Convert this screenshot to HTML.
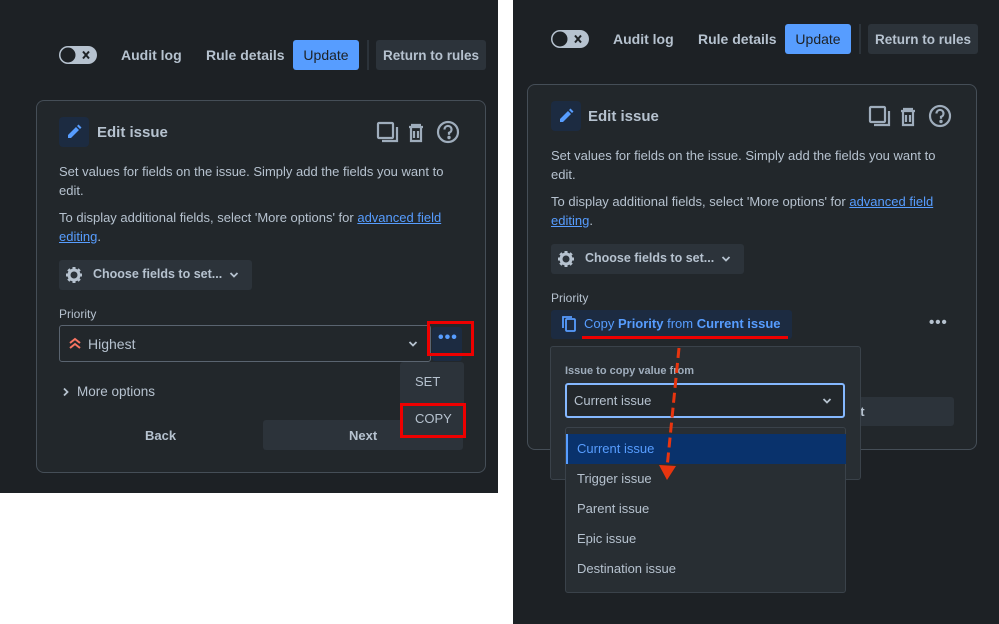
<!DOCTYPE html>
<html><head><meta charset="utf-8"><style>
*{box-sizing:border-box;margin:0;padding:0}
body{width:999px;height:624px;background:#fff;position:relative;overflow:hidden;font-family:"Liberation Sans",sans-serif;color:#b6c2cf}
.p{position:absolute;background:#1d2125;overflow:hidden}
.a{position:absolute}
.t{position:absolute;font-size:13px;color:#b6c2cf;white-space:nowrap}
.b{font-weight:bold}
.btn{position:absolute;border-radius:3px;font-size:14px;font-weight:bold;display:flex;align-items:center;justify-content:center}
.card{position:absolute;border:1px solid #454e57;border-radius:8px;background:#22272b}
a{color:#579dff;text-decoration:underline}
</style></head><body>

<!-- LEFT PANEL -->
<div class="p" style="left:0;top:0;width:498px;height:493px">
  <svg class="a" style="left:58px;top:45px" width="40" height="20" viewBox="0 0 40 20"><rect x="1" y="1" width="38" height="18" rx="9" fill="#b6c2cf"/><circle cx="10" cy="10" r="7.5" fill="#1d2125"/><path d="M25 6.5l6 7M31 6.5l-6 7" stroke="#1d2125" stroke-width="2"/></svg>
  <div class="t b" style="left:121px;top:47px;font-size:14px">Audit log</div>
  <div class="t b" style="left:206px;top:47px;font-size:14px">Rule details</div>
  <div class="btn" style="left:293px;top:40px;width:66px;height:30px;background:#579dff;color:#1d2125;font-weight:normal">Update</div>
  <div class="a" style="left:367px;top:40px;width:2px;height:30px;background:#2c333a"></div>
  <div class="btn" style="left:376px;top:40px;width:110px;height:30px;background:#2c333a;color:#b6c2cf;font-size:13.5px">Return to rules</div>
  <div class="card" style="left:36px;top:100px;width:450px;height:373px"></div>
  <div class="a" style="left:59px;top:117px;width:30px;height:30px;border-radius:4px;background:#1c2b41"></div>
  <svg class="a" style="left:64px;top:122px" width="20" height="20" viewBox="0 0 20 20"><path d="M4 13l8-8 3 3-8 8H4z M13 4l1.5-1.5 3 3L16 7z" fill="#579dff"/></svg>
  <div class="t b" style="left:97px;top:124px;font-size:15px">Edit issue</div>
  <svg class="a" style="left:376px;top:120px" width="86" height="26" viewBox="0 0 86 26" fill="none" stroke="#9fadbc" stroke-width="2.2"><rect x="2" y="3" width="15" height="15" rx="1"/><path d="M6 21h15V7"/><path d="M35 5h10M33 7h14M35 7v14h10V7M38 11v7M42 11v7"/><circle cx="72" cy="12" r="10"/><path d="M68.5 9.5a3.5 3.5 0 1 1 4.5 3.3v2"/><circle cx="73" cy="17.5" r=".6" fill="#9fadbc"/></svg>
  <div class="t" style="left:59px;top:162px;line-height:19px;white-space:normal;width:400px">Set values for fields on the issue. Simply add the fields you want to edit.</div>
  <div class="t" style="left:59px;top:208px;line-height:19px;white-space:normal;width:400px">To display additional fields, select 'More options' for <a>advanced field editing</a>.</div>
  <div class="a" style="left:59px;top:260px;width:193px;height:30px;background:#2c333a;border-radius:3px"></div>
  <svg class="a" style="left:64px;top:265px" width="20" height="20" viewBox="0 0 20 20"><g fill="none" stroke="#b6c2cf"><circle cx="10" cy="10" r="5" stroke-width="3"/><path d="M10 2v3M10 15v3M2 10h3M15 10h3M4.3 4.3l2.1 2.1M13.6 13.6l2.1 2.1M4.3 15.7l2.1-2.1M13.6 6.4l2.1-2.1" stroke-width="3"/></g></svg>
  <div class="t b" style="left:93px;top:267px;font-size:12.5px">Choose fields to set...</div>
  <svg class="a" style="left:229px;top:271px" width="10" height="8"><path d="M1.5 2l3.5 3.5L8.5 2" stroke="#b6c2cf" stroke-width="1.8" fill="none"/></svg>
  <div class="t" style="left:59px;top:307px;font-size:12px">Priority</div>
  <div class="a" style="left:59px;top:325px;width:372px;height:37px;border:1px solid #5a6470;border-radius:3px;background:#22272b"></div>
  <svg class="a" style="left:68px;top:337px" width="14" height="12"><path d="M2 6l5-4 5 4M2 11l5-4 5 4" stroke="#f87462" stroke-width="2" fill="none"/></svg>
  <div class="t" style="left:88px;top:336px;font-size:14px">Highest</div>
  <svg class="a" style="left:408px;top:340px" width="10" height="8"><path d="M1.5 2l3.5 3.5L8.5 2" stroke="#b6c2cf" stroke-width="1.8" fill="none"/></svg>
  <div class="a" style="left:263px;top:420px;width:200px;height:30px;background:#2c333a;border-radius:3px"></div>
  <div class="t b" style="left:349px;top:428px">Next</div>
  <div class="a" style="left:432px;top:327px;width:30px;height:34px;background:#1c2b41;border-radius:3px"></div>
  <div class="t b" style="left:438px;top:329px;color:#579dff;font-size:16px;letter-spacing:1px">•••</div>
  <div class="a" style="left:427px;top:321px;width:47px;height:35px;border:3px solid #e00"></div>
  <div class="a" style="left:400px;top:362px;width:64px;height:76px;background:#2c333a;border-radius:3px"></div>
  <div class="t" style="left:415px;top:374px">SET</div>
  <div class="t" style="left:415px;top:411px">COPY</div>
  <div class="a" style="left:400px;top:403px;width:66px;height:35px;border:3px solid #e00"></div>
  <svg class="a" style="left:62px;top:387px" width="8" height="10"><path d="M2 1.5l3.5 3.5L2 8.5" stroke="#b6c2cf" stroke-width="1.8" fill="none"/></svg>
  <div class="t" style="left:77px;top:384px;font-size:13.5px">More options</div>
  <div class="t b" style="left:145px;top:428px">Back</div>
</div>

<!-- RIGHT PANEL -->
<div class="p" style="left:513px;top:0;width:486px;height:624px">
  <svg class="a" style="left:37px;top:29px" width="40" height="20" viewBox="0 0 40 20"><rect x="1" y="1" width="38" height="18" rx="9" fill="#b6c2cf"/><circle cx="10" cy="10" r="7.5" fill="#1d2125"/><path d="M25 6.5l6 7M31 6.5l-6 7" stroke="#1d2125" stroke-width="2"/></svg>
  <div class="t b" style="left:100px;top:31px;font-size:14px">Audit log</div>
  <div class="t b" style="left:185px;top:31px;font-size:14px">Rule details</div>
  <div class="btn" style="left:272px;top:24px;width:66px;height:30px;background:#579dff;color:#1d2125;font-weight:normal">Update</div>
  <div class="a" style="left:346px;top:24px;width:2px;height:30px;background:#2c333a"></div>
  <div class="btn" style="left:355px;top:24px;width:110px;height:30px;background:#2c333a;color:#b6c2cf;font-size:13.5px">Return to rules</div>
  <div class="card" style="left:14px;top:84px;width:450px;height:366px"></div>
  <div class="a" style="left:38px;top:101px;width:30px;height:30px;border-radius:4px;background:#1c2b41"></div>
  <svg class="a" style="left:43px;top:106px" width="20" height="20" viewBox="0 0 20 20"><path d="M4 13l8-8 3 3-8 8H4z M13 4l1.5-1.5 3 3L16 7z" fill="#579dff"/></svg>
  <div class="t b" style="left:75px;top:108px;font-size:15px">Edit issue</div>
  <svg class="a" style="left:355px;top:104px" width="86" height="26" viewBox="0 0 86 26" fill="none" stroke="#9fadbc" stroke-width="2.2"><rect x="2" y="3" width="15" height="15" rx="1"/><path d="M6 21h15V7"/><path d="M35 5h10M33 7h14M35 7v14h10V7M38 11v7M42 11v7"/><circle cx="72" cy="12" r="10"/><path d="M68.5 9.5a3.5 3.5 0 1 1 4.5 3.3v2"/><circle cx="73" cy="17.5" r=".6" fill="#9fadbc"/></svg>
  <div class="t" style="left:38px;top:146px;line-height:19px;white-space:normal;width:400px">Set values for fields on the issue. Simply add the fields you want to edit.</div>
  <div class="t" style="left:38px;top:192px;line-height:19px;white-space:normal;width:400px">To display additional fields, select 'More options' for <a>advanced field editing</a>.</div>
  <div class="a" style="left:38px;top:244px;width:193px;height:30px;background:#2c333a;border-radius:3px"></div>
  <svg class="a" style="left:43px;top:249px" width="20" height="20" viewBox="0 0 20 20"><g fill="none" stroke="#b6c2cf"><circle cx="10" cy="10" r="5" stroke-width="3"/><path d="M10 2v3M10 15v3M2 10h3M15 10h3M4.3 4.3l2.1 2.1M13.6 13.6l2.1 2.1M4.3 15.7l2.1-2.1M13.6 6.4l2.1-2.1" stroke-width="3"/></g></svg>
  <div class="t b" style="left:72px;top:251px;font-size:12.5px">Choose fields to set...</div>
  <svg class="a" style="left:208px;top:255px" width="10" height="8"><path d="M1.5 2l3.5 3.5L8.5 2" stroke="#b6c2cf" stroke-width="1.8" fill="none"/></svg>
  <div class="t" style="left:38px;top:291px;font-size:12px">Priority</div>
  <div class="a" style="left:38px;top:310px;width:241px;height:29px;background:#1c2b41;border-radius:3px"></div>
  <svg class="a" style="left:47px;top:314px" width="18" height="20" viewBox="0 0 18 20" fill="none" stroke="#579dff" stroke-width="1.8"><rect x="6" y="5" width="9" height="12" rx="1"/><path d="M3 14V3h9"/></svg>
  <div class="t" style="left:71px;top:316px;color:#579dff">Copy <b>Priority</b> from <b>Current issue</b></div>
  <div class="a" style="left:69px;top:336px;width:206px;height:3px;background:#e00"></div>
  <div class="t b" style="left:416px;top:314px;font-size:15px;letter-spacing:1px">•••</div>
  <div class="a" style="left:332px;top:397px;width:109px;height:29px;background:#2c333a;border-radius:3px"></div>
  <div class="t b" style="left:340px;top:404px">xt</div>
  <div class="a" style="left:37px;top:346px;width:311px;height:134px;background:#282e33;border:1px solid #3a424a;border-radius:3px"></div>
  <div class="t b" style="left:52px;top:365px;font-size:11px;color:#9fadbc">Issue to copy value from</div>
  <div class="a" style="left:52px;top:383px;width:280px;height:35px;border:2px solid #85b8ff;border-radius:3px;background:#22272b"></div>
  <div class="t" style="left:61px;top:393px">Current issue</div>
  <svg class="a" style="left:309px;top:397px" width="10" height="8"><path d="M1.5 2l3.5 3.5L8.5 2" stroke="#b6c2cf" stroke-width="1.8" fill="none"/></svg>
  <div class="a" style="left:52px;top:427px;width:281px;height:166px;background:#282e33;border:1px solid #3a424a;border-radius:3px"></div>
  <div class="a" style="left:53px;top:434px;width:280px;height:30px;background:#09326c;border-left:2px solid #579dff"></div>
  <div class="t" style="left:64px;top:441px;color:#579dff">Current issue</div>
  <div class="t" style="left:64px;top:471px">Trigger issue</div>
  <div class="t" style="left:64px;top:501px">Parent issue</div>
  <div class="t" style="left:64px;top:531px">Epic issue</div>
  <div class="t" style="left:64px;top:561px">Destination issue</div>
  <svg class="a" style="left:140px;top:340px" width="40" height="150"><path d="M26 8L14 128" stroke="#e8350f" stroke-width="3" stroke-dasharray="10 5"/><path d="M6 125l8 15 9-14z" fill="#e8350f"/></svg>
</div>
</body></html>
